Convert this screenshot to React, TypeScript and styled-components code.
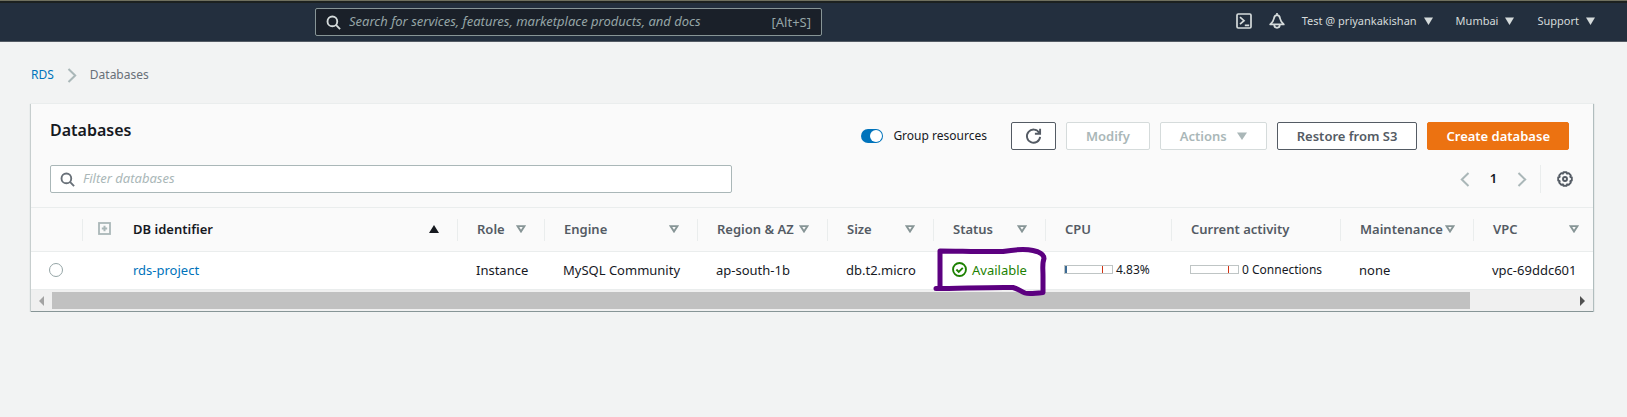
import React from 'react';
import styled, { createGlobalStyle, css } from 'styled-components';

const GlobalStyle = createGlobalStyle`
  *, *::before, *::after { box-sizing: border-box; }
  html { min-height: 100%; background: #f2f3f3; }
  body {
    margin: 0;
    color: #16191f;
    font: 400 13px/20px "Noto Sans", "Open Sans", sans-serif;
  }
  button, input { font: inherit; color: inherit; }
  a { color: #0073bb; text-decoration: none; }
  svg { display: block; flex: none; }
`;

/* ---------- Top navigation ---------- */

const TopBar = styled.header`
  display: flex;
  align-items: flex-start;
  height: 42px;
  padding: 5px 32px 0 315px;
  background: #232f3e;
  border-bottom: 1px solid #545b64;
  box-shadow: inset 0 1px #6f705f, inset 0 3px #1c2120;
`;

const GlobalSearch = styled.label`
  display: flex;
  flex: 0 1 507px;
  align-items: center;
  gap: 8px;
  height: 28px;
  margin-top: 3px;
  padding: 0 10px;
  color: #d5dbdb;
  background: #1a2029;
  border: 1px solid #879596;
  border-radius: 2px;
`;

const SearchInput = styled.input<{ $tone: string }>`
  flex: 1;
  min-width: 0;
  height: 24px;
  padding: 0 0 2px;
  background: none;
  border: 0;
  outline: 0;
  &::placeholder {
    color: ${(p) => p.$tone};
    font-style: italic;
    opacity: 1;
  }
`;

const Shortcut = styled.span`
  color: #95a5a6;
`;

const TopMenu = styled.nav`
  display: flex;
  align-items: center;
  height: 32px;
  margin-left: auto;
`;

const IconButton = styled.button`
  display: flex;
  padding: 0;
  color: inherit;
  background: none;
  border: 0;
`;

const TopIcons = styled.div`
  display: flex;
  gap: 17px;
  margin-right: 17px;
  color: #d5dbdb;
`;

const MenuButton = styled.button`
  display: flex;
  align-items: center;
  gap: 7px;
  padding: 0;
  color: #d5dbdb;
  font-size: 11px;
  background: none;
  border: 0;
  white-space: nowrap;
  & + & { margin-left: 23px; }
`;

/* ---------- Page ---------- */

const Page = styled.main`
  padding: 23px 34px 0 31px;
`;

const Crumbs = styled.nav`
  display: flex;
  align-items: center;
  gap: 13px;
  height: 20px;
  color: #687078;
  font-size: 12px;
`;

const Panel = styled.section`
  margin-top: 18px;
  background: #fafafa;
  border-top: 1px solid #eaeded;
  border-bottom: 1px solid #879596;
  box-shadow: 0 1px 1px #d5dbdb, 1px 1px 1px #aab7b8, -1px 1px 1px #c5cccc;
`;

const PanelHeader = styled.div`
  display: flex;
  align-items: flex-start;
  padding: 18px 24px 0 19px;
`;

const Title = styled.h2`
  flex: 1;
  margin: 0;
  font-size: 16px;
  font-weight: 600;
  line-height: 16px;
`;

const Controls = styled.div`
  display: flex;
  align-items: center;
  gap: 10px;
`;

const ToggleLabel = styled.label`
  display: flex;
  align-items: center;
  gap: 10px;
  margin-right: 14px;
  font-size: 12px;
`;

const Toggle = styled.input`
  display: flex;
  justify-content: flex-end;
  appearance: none;
  width: 22px;
  height: 14px;
  margin: 0;
  padding: 1px;
  background: #0073bb;
  border-radius: 7px;
  &::before {
    content: "";
    width: 12px;
    height: 12px;
    background: #fff;
    border-radius: 50%;
  }
  &:not(:checked) { justify-content: flex-start; background: #687078; }
`;

const Button = styled.button<{ $primary?: boolean; $icon?: boolean }>`
  display: flex;
  align-items: center;
  justify-content: center;
  gap: 10px;
  height: 28px;
  padding: 0 ${(p) => (p.$icon ? 13 : 19)}px;
  color: #545b64;
  font-weight: 600;
  background: #fff;
  border: 1px solid #545b64;
  border-radius: 2px;
  white-space: nowrap;
  &:disabled { color: #aab7b8; border-color: #d5dbdb; }
  ${(p) => p.$primary && css`
    padding: 0 18px;
    color: #fff;
    background: #ec7211;
    border-color: #ec7211;
  `}
`;

const FilterRow = styled.div`
  display: flex;
  align-items: center;
  justify-content: space-between;
  padding: 15px 20px 14px 19px;
`;

const FilterBox = styled.label`
  display: flex;
  flex: 0 1 682px;
  align-items: center;
  gap: 8px;
  height: 28px;
  padding: 0 9px;
  color: #687078;
  background: #fff;
  border: 1px solid #aab7b8;
  border-radius: 2px;
`;

const Pager = styled.div`
  display: flex;
  align-items: center;
  height: 28px;
  color: #aab7b8;
`;

const PageNumber = styled.span`
  width: 47px;
  padding-bottom: 2px;
  color: #16191f;
  font-weight: 600;
  text-align: center;
`;

const Settings = styled.div`
  display: flex;
  align-items: center;
  height: 28px;
  margin-left: 13px;
  padding-left: 16px;
  color: #545b64;
  border-left: 1px solid #eaeded;
`;

/* ---------- Table ---------- */

const Table = styled.table`
  width: 100%;
  table-layout: fixed;
  border-collapse: collapse;
  text-align: left;
`;

const Col = styled.col<{ $w?: number }>`
  width: ${(p) => (p.$w ? `${p.$w}px` : 'auto')};
`;

const Th = styled.th`
  height: 44px;
  padding: 0;
  font-weight: 600;
  border-top: 1px solid #eaeded;
  border-bottom: 1px solid #eaeded;
`;

const HeadCell = styled.div<{ $active?: boolean; $last?: boolean }>`
  display: flex;
  align-items: center;
  height: 22px;
  padding: 0 ${(p) => (p.$last ? 14 : 18)}px 2px 19px;
  color: ${(p) => (p.$active ? '#16191f' : '#545b64')};
  border-right: ${(p) => (p.$last ? 0 : 1)}px solid #eaeded;
  white-space: nowrap;
`;

const SortButton = styled.button`
  display: flex;
  flex: 1;
  align-items: center;
  justify-content: space-between;
  padding: 0;
  font-weight: 600;
  background: none;
  border: 0;
`;

const ExpandAll = styled.button`
  display: flex;
  margin: 0 22px 0 -4px;
  padding: 0;
  color: #aab7b8;
  background: none;
  border: 0;
`;

const Td = styled.td<{ $indent?: boolean }>`
  position: relative;
  height: 38px;
  padding: 0 0 2px ${(p) => (p.$indent ? 50 : 18)}px;
  background: #fff;
  border-bottom: 1px solid #eaeded;
  white-space: nowrap;
`;

const Radio = styled.input`
  display: block;
  appearance: none;
  width: 14px;
  height: 14px;
  margin: 0;
  border: 1px solid #95a5a6;
  border-radius: 50%;
  &:checked { border: 4px solid #0073bb; }
`;

const Inline = styled.span<{ $green?: boolean }>`
  display: flex;
  align-items: center;
  gap: ${(p) => (p.$green ? 5 : 3)}px;
  color: ${(p) => (p.$green ? '#1d8102' : 'inherit')};
  font-size: ${(p) => (p.$green ? 13 : 12)}px;
`;

const Meter = styled.span`
  display: flex;
  width: 49px;
  height: 9px;
  border: 1px solid #bfc5c5;
  background: linear-gradient(#d13212, #d13212) 37px 0 / 1px 100% no-repeat;
`;

const MeterFill = styled.span`
  background: #3b6a94;
`;

const Highlight = styled.svg`
  position: absolute;
  left: 0;
  top: -8px;
  z-index: 1;
  overflow: visible;
  pointer-events: none;
`;

const ScrollBar = styled.div`
  display: flex;
  align-items: center;
  height: 21px;
  background: #f0f0f0;
`;

const ScrollButton = styled.button<{ $dim?: boolean }>`
  display: flex;
  flex: none;
  align-items: center;
  justify-content: center;
  width: 21px;
  height: 21px;
  padding: 0;
  color: ${(p) => (p.$dim ? '#a3a3a3' : '#505050')};
  background: none;
  border: 0;
`;

const ScrollTrack = styled.div`
  flex: 1;
  height: 17px;
`;

const ScrollThumb = styled.div`
  width: 93.3%;
  height: 100%;
  background: #c1c1c1;
`;

/* ---------- Icons ---------- */

const SearchIcon = () => (
  <svg width="15" height="15" viewBox="0 0 16 16" fill="none" stroke="currentColor" strokeWidth="2">
    <circle cx="6.8" cy="6.8" r="5.2" />
    <path d="M10.6 10.6 15 15" />
  </svg>
);

const ConsoleIcon = () => (
  <svg width="16" height="16" viewBox="0 0 16 16" fill="none" stroke="currentColor" strokeWidth="1.7">
    <rect x="1" y="1" width="14" height="14" rx="1.2" />
    <path d="M4 4.2 8 7.7 4 11.2M8.8 12.3h4.4" />
  </svg>
);

const BellIcon = () => (
  <svg width="16" height="16" viewBox="0 0 16 16" fill="none" stroke="currentColor" strokeWidth="1.7" strokeLinejoin="round">
    <path d="M8 2.2C6 2.2 5.200 3.600 4.900 5.600 4.500 8.200 3.200 9.400 1.200 11.400h13.600c-2-2-3.300-3.200-3.700-5.800C10.800 3.600 10 2.200 8 2.200ZM8 0v2M5.200 11.800a2.800 3 0 0 0 5.600 0" />
  </svg>
);

const Caret = ({ size = 9 }: { size?: number }) => (
  <svg width={size} height="8" viewBox="0 0 10 8" preserveAspectRatio="none" fill="currentColor">
    <path d="M0 .5h10L5 8Z" />
  </svg>
);

const SortIcon = ({ up = false }: { up?: boolean }) =>
  up ? (
    <svg width="10" height="9" viewBox="0 0 10 9" fill="currentColor">
      <path d="M0 9 5 1l5 8Z" />
    </svg>
  ) : (
    <svg width="10" height="9" viewBox="0 0 10 9" fill="none" stroke="#879596" strokeWidth="1.9">
      <path d="M1.500 2.100h7L5 7.500Z" />
    </svg>
  );

const Chevron = ({ left = false }: { left?: boolean }) => (
  <svg width="10" height="15" viewBox="0 0 10 15" fill="none" stroke="#aab7b8" strokeWidth="2">
    <path d={left ? 'M8.500 1 1.800 7.500l6.700 6.500' : 'M1.500 1l6.700 6.500L1.500 14'} />
  </svg>
);

const RefreshIcon = () => (
  <svg width="17" height="17" viewBox="0 0 17 17" fill="none" stroke="currentColor" strokeWidth="1.9">
    <path d="M14.200 4.800A6.600 6.600 0 1 0 15.100 8.800M15.100.8v4.900H9.900" />
  </svg>
);

const GearIcon = () => (
  <svg width="16" height="16" viewBox="0 0 16 16" fill="none" stroke="currentColor" strokeWidth="1.9" strokeLinejoin="round">
    <path d="M6.500 1.200h3l.6 1.500 1.600-.5 2.100 2.100-.5 1.600 1.500.6v3l-1.500.6.5 1.600-2.100 2.100-1.600-.5-.6 1.500h-3l-.6-1.500-1.600.5-2.100-2.100.5-1.600-1.500-.6v-3l1.500-.6-.5-1.600 2.100-2.100 1.600.5Z" />
    <circle cx="8" cy="8" r="2" />
  </svg>
);

const ExpandIcon = () => (
  <svg width="13" height="13" viewBox="0 0 13 13" fill="none" stroke="currentColor">
    <rect x="1" y="1" width="11" height="11" strokeWidth="1.8" />
    <path d="M6.500 3.800v5.400M3.800 6.500h5.400" strokeWidth="2" />
  </svg>
);

const CheckIcon = () => (
  <svg width="15" height="15" viewBox="0 0 16 16" fill="none" stroke="currentColor" strokeWidth="2">
    <circle cx="8" cy="8" r="6.9" />
    <path d="m4.700 8 2.500 2.500 4.300-4.300" />
  </svg>
);

const ScrollArrow = ({ left = false }: { left?: boolean }) => (
  <svg width="5" height="10" viewBox="0 0 5 10" fill="currentColor">
    <path d={left ? 'M5 0v10L0 5Z' : 'M0 0v10l5-5Z'} />
  </svg>
);

/* ---------- Data ---------- */

type Column = { label: string; width: number; sortable: boolean };

const columns: Column[] = [
  { label: 'Role', width: 87, sortable: true },
  { label: 'Engine', width: 153, sortable: true },
  { label: 'Region & AZ', width: 130, sortable: true },
  { label: 'Size', width: 106, sortable: true },
  { label: 'Status', width: 112, sortable: true },
  { label: 'CPU', width: 126, sortable: false },
  { label: 'Current activity', width: 169, sortable: false },
  { label: 'Maintenance', width: 133, sortable: true },
  { label: 'VPC', width: 119, sortable: true },
];

const accountMenus = ['Test @ priyankakishan', 'Mumbai', 'Support'];

const cpu = 4.83;

export default function App() {
  return (
    <>
      <GlobalStyle />
      <TopBar>
        <GlobalSearch>
          <SearchIcon />
          <SearchInput
            $tone="#95a5a6"
            aria-label="Search"
            placeholder="Search for services, features, marketplace products, and docs"
          />
          <Shortcut>[Alt+S]</Shortcut>
        </GlobalSearch>
        <TopMenu>
          <TopIcons>
            <IconButton aria-label="CloudShell"><ConsoleIcon /></IconButton>
            <IconButton aria-label="Notifications"><BellIcon /></IconButton>
          </TopIcons>
          {accountMenus.map((name) => (
            <MenuButton key={name}>{name}<Caret /></MenuButton>
          ))}
        </TopMenu>
      </TopBar>

      <Page>
        <Crumbs aria-label="Breadcrumb">
          <a href="#rds">RDS</a>
          <Chevron />
          <span>Databases</span>
        </Crumbs>

        <Panel>
          <PanelHeader>
            <Title>Databases</Title>
            <Controls>
              <ToggleLabel>
                <Toggle type="checkbox" role="switch" defaultChecked />
                Group resources
              </ToggleLabel>
              <Button $icon aria-label="Refresh"><RefreshIcon /></Button>
              <Button disabled>Modify</Button>
              <Button disabled>Actions<Caret size={10} /></Button>
              <Button>Restore from S3</Button>
              <Button $primary>Create database</Button>
            </Controls>
          </PanelHeader>

          <FilterRow>
            <FilterBox>
              <SearchIcon />
              <SearchInput $tone="#aab7b8" aria-label="Filter databases" placeholder="Filter databases" />
            </FilterBox>
            <Pager>
              <IconButton aria-label="Previous page"><Chevron left /></IconButton>
              <PageNumber>1</PageNumber>
              <IconButton aria-label="Next page"><Chevron /></IconButton>
              <Settings>
                <IconButton aria-label="Preferences"><GearIcon /></IconButton>
              </Settings>
            </Pager>
          </FilterRow>

          <Table>
            <colgroup>
              <Col $w={52} />
              <Col />
              {columns.map((c) => <Col key={c.label} $w={c.width} />)}
            </colgroup>
            <thead>
              <tr>
                <Th aria-label="Selection"><HeadCell /></Th>
                <Th>
                  <HeadCell $active>
                    <ExpandAll aria-label="Expand all"><ExpandIcon /></ExpandAll>
                    <SortButton>DB identifier<SortIcon up /></SortButton>
                  </HeadCell>
                </Th>
                {columns.map((c, i) => (
                  <Th key={c.label}>
                    <HeadCell $last={i === columns.length - 1}>
                      {c.sortable ? <SortButton>{c.label}<SortIcon /></SortButton> : c.label}
                    </HeadCell>
                  </Th>
                ))}
              </tr>
            </thead>
            <tbody>
              <tr>
                <Td><Radio type="radio" name="database" aria-label="Select rds-project" /></Td>
                <Td $indent><a href="#rds-project">rds-project</a></Td>
                <Td>Instance</Td>
                <Td>MySQL Community</Td>
                <Td>ap-south-1b</Td>
                <Td>db.t2.micro</Td>
                <Td>
                  <Inline $green><CheckIcon />Available</Inline>
                  <Highlight width="116" height="56" viewBox="0 0 116 56" fill="none" stroke="#5c0080" strokeWidth="5" strokeLinecap="round" strokeLinejoin="round" aria-hidden="true">
                    <path d="M6 43V7C24 7 48 8 69 7.500 81 5.500 92 5 99 6.500c7 1.500 11 4 11 8-2 5-1 9-1 18v16c-8 1-15 1.500-18 .5-5-2-6-4-12-5.500C55 43 25 44.500 2 44.500" />
                  </Highlight>
                </Td>
                <Td>
                  <Inline>
                    <Meter><MeterFill style={{ width: `${cpu}%` }} /></Meter>
                    {cpu}%
                  </Inline>
                </Td>
                <Td><Inline><Meter />0 Connections</Inline></Td>
                <Td>none</Td>
                <Td>vpc-69ddc601</Td>
              </tr>
            </tbody>
          </Table>

          <ScrollBar>
            <ScrollButton $dim aria-label="Scroll left"><ScrollArrow left /></ScrollButton>
            <ScrollTrack><ScrollThumb /></ScrollTrack>
            <ScrollButton aria-label="Scroll right"><ScrollArrow /></ScrollButton>
          </ScrollBar>
        </Panel>
      </Page>
    </>
  );
}
